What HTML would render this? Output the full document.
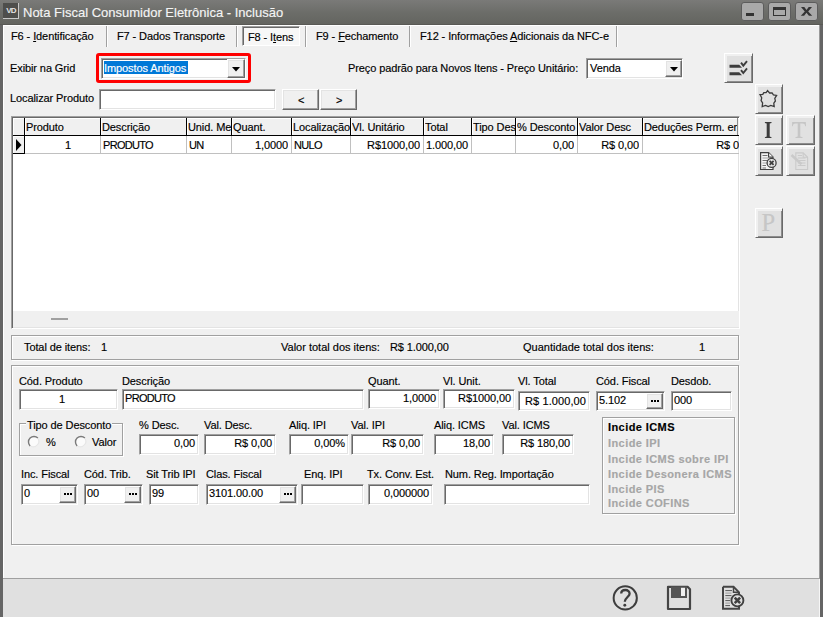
<!DOCTYPE html>
<html><head><meta charset="utf-8">
<style>
*{box-sizing:border-box;margin:0;padding:0}
html,body{width:823px;height:617px;overflow:hidden;background:#656565}
body{position:relative;font-family:"Liberation Sans",sans-serif;font-size:11px;color:#000}
.a{position:absolute}
.t{position:absolute;white-space:pre;line-height:13px;font-size:11px;letter-spacing:-0.1px;-webkit-text-stroke:0.15px currentColor}
.ed{position:absolute;background:#fff;border-top:1px solid #a0a0a0;border-left:1px solid #a0a0a0;border-right:1px solid #fff;border-bottom:1px solid #fff;box-shadow:inset 1px 1px 0 #696969,inset -1px -1px 0 #e3e3e3}
.btn{position:absolute;background:#f0f0f0;border-top:1px solid #fff;border-left:1px solid #fff;border-right:1px solid #696969;border-bottom:1px solid #696969;box-shadow:inset -1px -1px 0 #a0a0a0,inset 1px 1px 0 #e3e3e3}
.etch{position:absolute;border:1px solid #a0a0a0;box-shadow:1px 1px 0 #fff,inset 1px 1px 0 #fff}
.tb{position:absolute;background:#e1e1e1;border-top:1px solid #fff;border-left:1px solid #fff;border-right:1px solid #696969;border-bottom:1px solid #696969;box-shadow:inset 1px 1px 0 #f0f0f0,inset 2px 2px 0 #f0f0f0,inset -1px -1px 0 #8c8c8c}
.ul{text-decoration:underline}
</style></head><body>
<!-- title bar -->
<div class="a" style="left:0;top:0;width:823px;height:25px;background:linear-gradient(#7a7a78,#6c6d69 50%,#63645f)"></div>
<div class="a" style="left:0;top:24px;width:823px;height:1px;background:#595955"></div>
<div class="a" style="left:3px;top:3px;width:16px;height:16px;background:#4e4e4c;border-right:1px solid #c8c8c8;border-bottom:1px solid #c8c8c8"></div>
<div class="a" style="left:3px;top:5px;width:16px;height:12px;color:#e4e4e4;font-size:8px;font-weight:bold;line-height:12px;text-align:center;letter-spacing:-0.8px">VD</div>
<div class="t" style="left:23px;top:5px;font-size:13px;line-height:16px;color:#f4f4f4;letter-spacing:0">Nota Fiscal Consumidor Eletrônica - Inclusão</div>
<!-- window buttons -->
<div class="a" style="left:741px;top:2px;width:23px;height:19px;background:#a9a9a9;border:1px solid #5c5c5c;border-radius:3px"><div class="a" style="left:4px;top:10px;width:8px;height:3px;background:#333"></div></div>
<div class="a" style="left:768px;top:2px;width:23px;height:19px;background:#a9a9a9;border:1px solid #5c5c5c;border-radius:3px"><div class="a" style="left:4px;top:4px;width:13px;height:9px;border:1px solid #333;border-top:3px solid #333"></div></div>
<div class="a" style="left:795px;top:2px;width:23px;height:19px;background:#a9a9a9;border:1px solid #5c5c5c;border-radius:3px">
<svg class="a" style="left:4px;top:3px" width="14" height="12"><path d="M1.0 1.0L4.3 1.0L6.5 4.0L8.7 1.0L12.0 1.0L8.2 5.4L12.2 9.8L8.9 9.8L6.5 6.7L4.1 9.8L0.8 9.8L4.8 5.4Z" fill="#333"/></svg></div>

<!-- content -->
<div class="a" style="left:3px;top:25px;width:817px;height:553px;background:#f0f0f0;border-left:1px solid #fff;border-top:1px solid #fff"></div>
<!-- bottom bar -->
<div class="a" style="left:3px;top:578px;width:817px;height:39px;background:#e0e0e0;border-top:1px solid #a0a0a0"></div>
<div class="a" style="left:819px;top:25px;width:1px;height:553px;background:#9a9a9a"></div>
<div class="a" style="left:819px;top:579px;width:1px;height:38px;background:#f6f6f6"></div>

<!-- tabs -->
<div class="t" style="left:11px;top:30px">F6 - <span class="ul">I</span>dentificação</div>
<div class="a" style="left:106px;top:26px;width:1px;height:21px;background:#a0a0a0;box-shadow:1px 0 0 #fff"></div>
<div class="t" style="left:117px;top:30px">F7 - Dados Transporte</div>
<div class="a" style="left:236px;top:26px;width:1px;height:21px;background:#a0a0a0;box-shadow:1px 0 0 #fff"></div>
<div class="a" style="left:242px;top:26px;width:58px;height:20px;background:#f7f7f7;border-top:1px solid #a0a0a0;border-left:1px solid #a0a0a0;border-right:1px solid #fff;border-bottom:1px solid #fff;box-shadow:inset 1px 1px 0 #696969"></div>
<div class="t" style="left:248px;top:31px">F8 - I<span class="ul">t</span>ens</div>
<div class="a" style="left:305px;top:26px;width:1px;height:21px;background:#a0a0a0;box-shadow:1px 0 0 #fff"></div>
<div class="t" style="left:316px;top:30px">F9 - <span class="ul">F</span>echamento</div>
<div class="a" style="left:409px;top:26px;width:1px;height:21px;background:#a0a0a0;box-shadow:1px 0 0 #fff"></div>
<div class="t" style="left:420px;top:30px">F12 - Informações <span class="ul">A</span>dicionais da NFC-e</div>
<div class="a" style="left:616px;top:26px;width:1px;height:21px;background:#a0a0a0;box-shadow:1px 0 0 #fff"></div>

<!-- row exibir -->
<div class="t" style="left:10px;top:62px">Exibir na Grid</div>
<div class="a" style="left:96px;top:53px;width:155px;height:30px;border:3px solid #f00;border-radius:3px"></div>
<div class="ed" style="left:101px;top:58px;width:145px;height:21px"></div>
<div class="a" style="left:104px;top:61px;width:84px;height:13px;background:#0078d7"></div>
<div class="t" style="left:104px;top:62px;color:#fff">Impostos Antigos</div>
<div class="btn" style="left:227px;top:59px;width:18px;height:19px"><svg class="a" style="left:4px;top:7px" width="8" height="5"><path d="M0 0H8L4 4.5Z" fill="#000"/></svg></div>

<div class="t" style="left:348px;top:62px">Preço padrão para Novos Itens - Preço Unitário:</div>
<div class="ed" style="left:586px;top:58px;width:97px;height:21px"></div>
<div class="t" style="left:590px;top:62px">Venda</div>
<div class="btn" style="left:665px;top:60px;width:17px;height:17px"><svg class="a" style="left:4px;top:6px" width="8" height="5"><path d="M0 0H8L4 4.5Z" fill="#000"/></svg></div>

<div class="tb" style="left:724px;top:53px;width:29px;height:30px"></div>

<!-- localizar -->
<div class="t" style="left:10px;top:92px">Localizar Produto</div>
<div class="ed" style="left:99px;top:89px;width:177px;height:21px"></div>
<div class="btn" style="left:282px;top:89px;width:37px;height:21px"></div>
<div class="t" style="left:298px;top:94px">&lt;</div>
<div class="btn" style="left:320px;top:89px;width:37px;height:21px"></div>
<div class="t" style="left:336px;top:94px">&gt;</div>

<!-- right toolbar -->
<div class="tb" style="left:755px;top:84px;width:28px;height:30px"></div>
<div class="tb" style="left:755px;top:115px;width:28px;height:30px"></div>
<div class="tb" style="left:786px;top:115px;width:29px;height:30px"></div>
<div class="tb" style="left:755px;top:146px;width:28px;height:30px"></div>
<div class="tb" style="left:786px;top:146px;width:29px;height:30px"></div>
<div class="tb" style="left:755px;top:208px;width:28px;height:30px"></div>
<!-- grid -->
<div class="a" style="left:11px;top:116px;width:729px;height:213px;background:#fff;border-top:1px solid #a0a0a0;border-left:1px solid #a0a0a0;border-right:1px solid #fff;border-bottom:1px solid #fff;box-shadow:inset 1px 1px 0 #696969,inset -1px -1px 0 #e3e3e3"></div>

<div class="a" style="left:13px;top:118px;width:726px;height:209px;overflow:hidden">
<div class="a" style="left:0;top:0;width:726px;height:17px;background:#f0f0f0"></div>
<div class="a" style="left:0;top:0;width:11px;height:17px;border-top:1px solid #fff;border-left:1px solid #fff;"></div>
<div class="a" style="left:0;top:18px;width:11px;height:17px;background:#f0f0f0;border-top:1px solid #fff;border-left:1px solid #fff"></div>
<svg class="a" style="left:3px;top:21px" width="6" height="12"><path d="M0 0L5.5 6L0 12Z" fill="#000"/></svg>
<div class="a" style="left:0;top:17px;width:726px;height:1px;background:#000"></div>
<div class="a" style="left:0;top:35px;width:12px;height:1px;background:#000"></div>
<div class="a" style="left:12px;top:35px;width:715px;height:1px;background:#c0c0c0"></div>
<div class="a" style="left:11px;top:0;width:1px;height:18px;background:#000"></div>
<div class="a" style="left:11px;top:18px;width:1px;height:18px;background:#000"></div>
<div class="a" style="left:87px;top:0;width:1px;height:18px;background:#000"></div>
<div class="a" style="left:87px;top:18px;width:1px;height:18px;background:#c0c0c0"></div>
<div class="a" style="left:173px;top:0;width:1px;height:18px;background:#000"></div>
<div class="a" style="left:173px;top:18px;width:1px;height:18px;background:#c0c0c0"></div>
<div class="a" style="left:218px;top:0;width:1px;height:18px;background:#000"></div>
<div class="a" style="left:218px;top:18px;width:1px;height:18px;background:#c0c0c0"></div>
<div class="a" style="left:278px;top:0;width:1px;height:18px;background:#000"></div>
<div class="a" style="left:278px;top:18px;width:1px;height:18px;background:#c0c0c0"></div>
<div class="a" style="left:337px;top:0;width:1px;height:18px;background:#000"></div>
<div class="a" style="left:337px;top:18px;width:1px;height:18px;background:#c0c0c0"></div>
<div class="a" style="left:410px;top:0;width:1px;height:18px;background:#000"></div>
<div class="a" style="left:410px;top:18px;width:1px;height:18px;background:#c0c0c0"></div>
<div class="a" style="left:458px;top:0;width:1px;height:18px;background:#000"></div>
<div class="a" style="left:458px;top:18px;width:1px;height:18px;background:#c0c0c0"></div>
<div class="a" style="left:502px;top:0;width:1px;height:18px;background:#000"></div>
<div class="a" style="left:502px;top:18px;width:1px;height:18px;background:#c0c0c0"></div>
<div class="a" style="left:564px;top:0;width:1px;height:18px;background:#000"></div>
<div class="a" style="left:564px;top:18px;width:1px;height:18px;background:#c0c0c0"></div>
<div class="a" style="left:629px;top:0;width:1px;height:18px;background:#000"></div>
<div class="a" style="left:629px;top:18px;width:1px;height:18px;background:#c0c0c0"></div>
<div class="a" style="left:744px;top:0;width:1px;height:18px;background:#000"></div>
<div class="a" style="left:744px;top:18px;width:1px;height:18px;background:#c0c0c0"></div>
<div class="a" style="left:12px;top:0;width:75px;height:17px;border-top:1px solid #fff;border-left:1px solid #fff"></div>
<div class="t" style="left:13px;top:3px;width:74px;overflow:hidden">Produto</div>
<div class="a" style="left:88px;top:0;width:85px;height:17px;border-top:1px solid #fff;border-left:1px solid #fff"></div>
<div class="t" style="left:89px;top:3px;width:84px;overflow:hidden">Descrição</div>
<div class="a" style="left:174px;top:0;width:44px;height:17px;border-top:1px solid #fff;border-left:1px solid #fff"></div>
<div class="t" style="left:175px;top:3px;width:43px;overflow:hidden">Unid. Me</div>
<div class="a" style="left:219px;top:0;width:59px;height:17px;border-top:1px solid #fff;border-left:1px solid #fff"></div>
<div class="t" style="left:220px;top:3px;width:58px;overflow:hidden">Quant.</div>
<div class="a" style="left:279px;top:0;width:58px;height:17px;border-top:1px solid #fff;border-left:1px solid #fff"></div>
<div class="t" style="left:280px;top:3px;width:57px;overflow:hidden">Localização</div>
<div class="a" style="left:338px;top:0;width:72px;height:17px;border-top:1px solid #fff;border-left:1px solid #fff"></div>
<div class="t" style="left:339px;top:3px;width:71px;overflow:hidden">Vl. Unitário</div>
<div class="a" style="left:411px;top:0;width:47px;height:17px;border-top:1px solid #fff;border-left:1px solid #fff"></div>
<div class="t" style="left:412px;top:3px;width:46px;overflow:hidden">Total</div>
<div class="a" style="left:459px;top:0;width:43px;height:17px;border-top:1px solid #fff;border-left:1px solid #fff"></div>
<div class="t" style="left:460px;top:3px;width:42px;overflow:hidden">Tipo Des</div>
<div class="a" style="left:503px;top:0;width:61px;height:17px;border-top:1px solid #fff;border-left:1px solid #fff"></div>
<div class="t" style="left:504px;top:3px;width:60px;overflow:hidden">% Desconto</div>
<div class="a" style="left:565px;top:0;width:64px;height:17px;border-top:1px solid #fff;border-left:1px solid #fff"></div>
<div class="t" style="left:566px;top:3px;width:63px;overflow:hidden">Valor Desc</div>
<div class="a" style="left:630px;top:0;width:114px;height:17px;border-top:1px solid #fff;border-left:1px solid #fff"></div>
<div class="t" style="left:631px;top:3px;width:93px;overflow:hidden">Deduções Perm. em</div>
<div class="t" style="left:52px;top:21px">1</div>
<div class="t" style="left:90px;top:21px;width:83px;overflow:hidden;letter-spacing:-0.7px;">PRODUTO</div>
<div class="t" style="left:176px;top:21px;width:42px;overflow:hidden;letter-spacing:-0.7px;">UN</div>
<div class="t" style="left:219px;top:21px;width:56px;text-align:right;overflow:hidden">1,0000</div>
<div class="t" style="left:281px;top:21px;width:56px;overflow:hidden;letter-spacing:-0.7px;">NULO</div>
<div class="t" style="left:338px;top:21px;width:69px;text-align:right;overflow:hidden">R$1000,00</div>
<div class="t" style="left:413px;top:21px;width:45px;overflow:hidden;">1.000,00</div>
<div class="t" style="left:503px;top:21px;width:58px;text-align:right;overflow:hidden">0,00</div>
<div class="t" style="left:565px;top:21px;width:61px;text-align:right;overflow:hidden">R$ 0,00</div>
<div class="t" style="left:630px;top:21px;width:111px;text-align:right;overflow:hidden">R$ 0,00</div>
<div class="a" style="left:724px;top:0;width:1px;height:17px;background:#8c8c8c"></div>
<div class="a" style="left:0;top:193px;width:726px;height:16px;background:#f0f0f0"></div>
<div class="a" style="left:38px;top:200px;width:17px;height:2px;background:#a0a0a0"></div>
</div>
<!-- totals -->
<div class="etch" style="left:11px;top:335px;width:728px;height:25px"></div>
<div class="t" style="left:24px;top:341px">Total de itens:</div>
<div class="t" style="left:101px;top:341px">1</div>
<div class="t" style="left:281px;top:341px;letter-spacing:0">Valor total dos itens:</div>
<div class="t" style="left:390px;top:341px">R$ 1.000,00</div>
<div class="t" style="left:523px;top:341px;letter-spacing:0">Quantidade total dos itens:</div>
<div class="t" style="left:699px;top:341px">1</div>

<!-- detail panel -->
<div class="etch" style="left:11px;top:365px;width:728px;height:180px"></div>

<div class="t" style="left:19px;top:375px;">Cód. Produto</div>
<div class="ed" style="left:19px;top:389px;width:99px;height:21px"></div>
<div class="t" style="left:59px;top:393px;">1</div>
<div class="t" style="left:122px;top:375px;">Descrição</div>
<div class="ed" style="left:122px;top:389px;width:242px;height:21px"></div><div class="t" style="left:125px;top:392px;letter-spacing:-0.7px">PRODUTO</div>
<div class="t" style="left:368px;top:375px;">Quant.</div>
<div class="ed" style="left:368px;top:389px;width:72px;height:20px"></div><div class="t" style="left:368px;top:392px;width:68px;text-align:right;">1,0000</div>
<div class="t" style="left:443px;top:375px;">Vl. Unit.</div>
<div class="ed" style="left:443px;top:389px;width:72px;height:20px"></div><div class="t" style="left:443px;top:392px;width:68px;text-align:right;">R$1000,00</div>
<div class="t" style="left:518px;top:375px;">Vl. Total</div>
<div class="ed" style="left:518px;top:391px;width:72px;height:20px"></div>
<div class="t" style="left:525px;top:395px;letter-spacing:0.1px">R$ 1.000,00</div>
<div class="t" style="left:596px;top:375px;">Cód. Fiscal</div>
<div class="ed" style="left:596px;top:391px;width:69px;height:20px"></div><div class="t" style="left:599px;top:394px;">5.102</div>
<div class="btn" style="left:646px;top:393px;width:17px;height:16px"><svg class="a" style="left:4px;top:6px" width="8" height="2"><rect x="0" y="0" width="2" height="2" fill="#000"/><rect x="3" y="0" width="2" height="2" fill="#000"/><rect x="6" y="0" width="2" height="2" fill="#000"/></svg></div>
<div class="t" style="left:671px;top:375px;">Desdob.</div>
<div class="ed" style="left:671px;top:391px;width:61px;height:20px"></div><div class="t" style="left:674px;top:394px;">000</div>
<div class="a" style="left:19px;top:423px;width:104px;height:33px;border:1px solid #a0a0a0;box-shadow:inset 1px 1px 0 #fff,1px 1px 0 #fff"></div>
<div class="t" style="left:26px;top:419px;height:11px;background:#f0f0f0;padding:0 1px">Tipo de Desconto</div>
<svg class="a" style="left:26.5px;top:435px" width="14" height="14"><circle cx="7" cy="7" r="5" fill="#fbfbfb"/><path d="M3.1 10.9A5.5 5.5 0 0 1 10.9 3.1" stroke="#7a7a7a" stroke-width="1.4" fill="none"/><path d="M11.2 3.8A5.5 5.5 0 0 1 3.8 11.2" stroke="#e6e6e6" stroke-width="1.2" fill="none"/></svg>
<div class="t" style="left:46px;top:436px;">%</div>
<svg class="a" style="left:73.6px;top:435px" width="14" height="14"><circle cx="7" cy="7" r="5" fill="#fbfbfb"/><path d="M3.1 10.9A5.5 5.5 0 0 1 10.9 3.1" stroke="#7a7a7a" stroke-width="1.4" fill="none"/><path d="M11.2 3.8A5.5 5.5 0 0 1 3.8 11.2" stroke="#e6e6e6" stroke-width="1.2" fill="none"/></svg>
<div class="t" style="left:92px;top:436px;">Valor</div>
<div class="t" style="left:139px;top:419px;">% Desc.</div>
<div class="ed" style="left:139px;top:434px;width:60px;height:21px"></div><div class="t" style="left:139px;top:437px;width:56px;text-align:right;">0,00</div>
<div class="t" style="left:204px;top:419px;">Val. Desc.</div>
<div class="ed" style="left:204px;top:434px;width:72px;height:21px"></div><div class="t" style="left:204px;top:437px;width:68px;text-align:right;">R$ 0,00</div>
<div class="t" style="left:289px;top:419px;">Aliq. IPI</div>
<div class="ed" style="left:289px;top:434px;width:60px;height:21px"></div><div class="t" style="left:289px;top:437px;width:56px;text-align:right;">0,00%</div>
<div class="t" style="left:351px;top:419px;">Val. IPI</div>
<div class="ed" style="left:351px;top:434px;width:73px;height:21px"></div><div class="t" style="left:351px;top:437px;width:69px;text-align:right;">R$ 0,00</div>
<div class="t" style="left:434px;top:419px;">Aliq. ICMS</div>
<div class="ed" style="left:434px;top:434px;width:60px;height:21px"></div><div class="t" style="left:434px;top:437px;width:56px;text-align:right;">18,00</div>
<div class="t" style="left:502px;top:419px;">Val. ICMS</div>
<div class="ed" style="left:502px;top:434px;width:72px;height:21px"></div><div class="t" style="left:502px;top:437px;width:68px;text-align:right;">R$ 180,00</div>
<div class="a" style="left:602px;top:417px;width:133px;height:97px;border:1px solid #a0a0a0;box-shadow:inset 1px 1px 0 #fff,1px 1px 0 #fff"></div>
<div class="t" style="left:608px;top:421px;font-weight:bold;color:#000;letter-spacing:0.42px">Incide ICMS</div>
<div class="t" style="left:608px;top:437px;font-weight:bold;color:#a6a6a6;letter-spacing:0.42px">Incide IPI</div>
<div class="t" style="left:608px;top:453px;font-weight:bold;color:#a6a6a6;letter-spacing:0.42px">Incide ICMS sobre IPI</div>
<div class="t" style="left:608px;top:468px;font-weight:bold;color:#a6a6a6;letter-spacing:0.42px">Incide Desonera ICMS</div>
<div class="t" style="left:608px;top:483px;font-weight:bold;color:#a6a6a6;letter-spacing:0.42px">Incide PIS</div>
<div class="t" style="left:608px;top:497px;font-weight:bold;color:#a6a6a6;letter-spacing:0.42px">Incide COFINS</div>
<div class="t" style="left:21px;top:468px;">Inc. Fiscal</div>
<div class="ed" style="left:21px;top:484px;width:57px;height:21px"></div><div class="t" style="left:24px;top:487px;">0</div>
<div class="btn" style="left:59px;top:486px;width:17px;height:17px"><svg class="a" style="left:4px;top:6px" width="8" height="2"><rect x="0" y="0" width="2" height="2" fill="#000"/><rect x="3" y="0" width="2" height="2" fill="#000"/><rect x="6" y="0" width="2" height="2" fill="#000"/></svg></div>
<div class="t" style="left:84px;top:468px;">Cód. Trib.</div>
<div class="ed" style="left:84px;top:484px;width:59px;height:21px"></div><div class="t" style="left:87px;top:487px;">00</div>
<div class="btn" style="left:124px;top:486px;width:17px;height:17px"><svg class="a" style="left:4px;top:6px" width="8" height="2"><rect x="0" y="0" width="2" height="2" fill="#000"/><rect x="3" y="0" width="2" height="2" fill="#000"/><rect x="6" y="0" width="2" height="2" fill="#000"/></svg></div>
<div class="t" style="left:146px;top:468px;">Sit Trib IPI</div>
<div class="ed" style="left:149px;top:484px;width:50px;height:21px"></div><div class="t" style="left:152px;top:487px;">99</div>
<div class="t" style="left:206px;top:468px;">Clas. Fiscal</div>
<div class="ed" style="left:206px;top:484px;width:92px;height:21px"></div><div class="t" style="left:209px;top:487px;">3101.00.00</div>
<div class="btn" style="left:279px;top:486px;width:17px;height:17px"><svg class="a" style="left:4px;top:6px" width="8" height="2"><rect x="0" y="0" width="2" height="2" fill="#000"/><rect x="3" y="0" width="2" height="2" fill="#000"/><rect x="6" y="0" width="2" height="2" fill="#000"/></svg></div>
<div class="t" style="left:304px;top:468px;">Enq. IPI</div>
<div class="ed" style="left:301px;top:484px;width:63px;height:21px"></div>
<div class="t" style="left:367px;top:468px;">Tx. Conv. Est.</div>
<div class="ed" style="left:368px;top:484px;width:65px;height:21px"></div><div class="t" style="left:368px;top:487px;width:61px;text-align:right;">0,000000</div>
<div class="t" style="left:445px;top:468px;">Num. Reg. Importação</div>
<div class="ed" style="left:444px;top:484px;width:146px;height:21px"></div>
<svg class="a" style="left:0;top:0" width="823" height="617" viewBox="0 0 823 617">
<!-- checklist icon -->
<g fill="#3c3c3c">
<path d="M729.5 64.8H739.2L742 67.8H729.5Z"/>
<path d="M729.5 72.2H739.2L742 75.2H729.5Z"/>
</g>
<g fill="none" stroke="#3c3c3c" stroke-width="1.9" stroke-linecap="square">
<path d="M741.6 63.4L743.3 65.6L746.4 61.8"/>
<path d="M741.6 70.8L743.3 73L746.4 69.2"/>
</g>
<!-- jagged pentagon -->
<path d="M767.6 90.6L769.6 93.0L772.1 93.0L773.4 94.9L776.6 95.4L774.8 98.3L775.4 101.0L773.8 103.1L774.2 106.6L770.8 105.5L768.2 106.6L765.6 105.5L762.2 106.6L762.6 102.9L761.1 100.6L761.7 97.8L760.0 94.6L762.8 94.4L763.8 92.6L766.1 92.7Z" fill="none" stroke="#3a3a3a" stroke-width="1.3" stroke-linejoin="miter"/>
<!-- I and T -->
<path d="M764.9 122H771.5V122.9L769.7 123.5V136.6L771.5 137.2V138.1H764.9V137.2L766.7 136.6V123.5L764.9 122.9Z" fill="#3c3c3c"/>
<path d="M792.2 122H805.8L806 126.3H805.3C804.8 124.3 804.3 123.6 802.3 123.6H800.3V136.5L802.6 137.2V138.1H795.4V137.2L797.7 136.5V123.6H795.7C793.7 123.6 793.2 124.3 792.7 126.3H792Z" fill="#c6c6c6"/>
<text x="768.3" y="230.8" font-family="Liberation Serif" font-size="24.5" text-anchor="middle" fill="#c6c6c6" stroke="#c6c6c6" stroke-width="0.15">P</text>
<!-- doc-x small -->
<g stroke="#404040" fill="none" stroke-width="1.2">
<path d="M760.6 152.7H768.6L773 157.1V169.5H760.6Z" fill="#f4f4f4"/>
<path d="M768.6 152.7V157.1H773" fill="#fff"/>
<path d="M762.5 155.5H767.5M762.5 160.5H770M762.5 165.5H766M762.5 168H766" stroke="#707070"/>
<path d="M762.5 158H770M762.5 163H767" stroke="#a0a0a0"/>
<circle cx="771.6" cy="162.9" r="4.5" fill="#e8e8e8" stroke-width="1.3"/>
<path d="M769.6 160.9L773.6 164.9M773.6 160.9L769.6 164.9" stroke-width="1.8"/>
</g>
<!-- disabled doc-edit -->
<g stroke="#cacaca" fill="none" stroke-width="1.1">
<path d="M795.8 152.9H803.2L807.6 157.3V169.5H795.8Z"/>
<path d="M803.2 152.9V157.3H807.6"/>
<path d="M797.8 155.5H802M797.8 158H805.5M797.8 160.5H805.5M797.8 163H805.5M797.8 165.5H805.5"/>
<path d="M791.5 155L801.5 164.2" stroke-width="2.6"/>
</g>
<!-- bottom help -->
<circle cx="625.25" cy="597.9" r="11.6" fill="none" stroke="#3e3e3e" stroke-width="2"/>
<path d="M621.2 593.6C621.2 591.3 623 590 625.4 590C627.8 590 629.6 591.6 629.6 593.8C629.6 596.6 624.8 597.7 624.8 601.8" fill="none" stroke="#3e3e3e" stroke-width="2.3"/>
<circle cx="624.8" cy="605.3" r="1.45" fill="#3e3e3e"/>
<!-- floppy -->
<path d="M668 586.8H687.6L690 589.2V609H668Z" fill="none" stroke="#454545" stroke-width="2.2" stroke-linejoin="round"/>
<rect x="671" y="586.5" width="16" height="11.5" fill="#555"/>
<rect x="681" y="587.8" width="4" height="8.2" fill="#f0f0f0"/>
<!-- doc x -->
<g stroke="#454545" fill="none" stroke-width="2">
<path d="M723 586.8H733.5L739 592.3V597M723 586.8V608.8H739V606"/>
<path d="M733.5 586.8V592.3H739" stroke-width="1.5"/>
</g>
<path d="M725.3 590.6H732M725.3 595.6H731.5M725.3 600.6H730M725.3 605.6H730" stroke="#555" stroke-width="1"/>
<path d="M725.3 593.1H731.5M725.3 598.1H730.5M725.3 603.1H730" stroke="#999" stroke-width="1"/>
<circle cx="737.4" cy="600.4" r="6" fill="#e0e0e0" stroke="#404040" stroke-width="1.9"/>
<path d="M734.7 597.7L740.1 603.1M740.1 597.7L734.7 603.1" stroke="#404040" stroke-width="2.6"/>
</svg>

</body></html>
